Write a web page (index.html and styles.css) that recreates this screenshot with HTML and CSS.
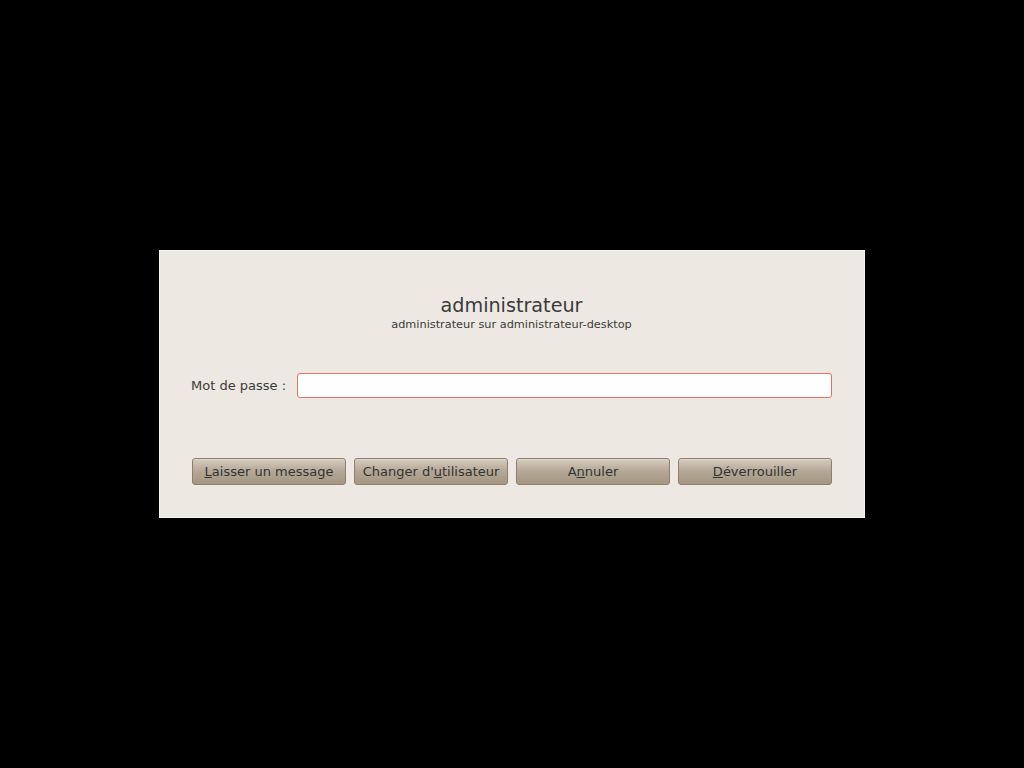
FILE: index.html
```html
<!DOCTYPE html>
<html lang="fr">
<head>
<meta charset="utf-8">
<link rel="stylesheet" href="styles.css">
</head>
<body>
<div class="screen">
  <div class="dialog">
    <div class="header">
      <div class="title">administrateur</div>
      <div class="subtitle">administrateur sur administrateur-desktop</div>
    </div>
    <div class="row">
      <label class="label">Mot de passe :</label>
      <div class="input"></div>
    </div>
    <div class="buttons">
      <button class="btn"><u>L</u>aisser un message</button>
      <button class="btn">Changer d'<u>u</u>tilisateur</button>
      <button class="btn">A<u>n</u>nuler</button>
      <button class="btn"><u>D</u>éverrouiller</button>
    </div>
  </div>
</div>
</body>
</html>
```
FILE: styles.css
```css
html, body {
  margin: 0;
  padding: 0;
  background: #000;
  width: 1024px;
  height: 768px;
  overflow: hidden;
}
.screen {
  width: 1024px;
  height: 768px;
  display: flex;
  align-items: flex-start;
  justify-content: center;
  padding-top: 250px;
  box-sizing: border-box;
  font-family: "DejaVu Sans", sans-serif;
  color: #3c3c3c;
}
.dialog {
  width: 706px;
  height: 268px;
  box-sizing: border-box;
  background: #ede9e2;
  border: 1px solid #f7f3e6;
  padding: 44px 32px 0 31px;
}
.header {
  text-align: center;
}
.title {
  font-size: 19.2px;
  line-height: 22px;
  color: #3a3a3a;
}
.subtitle {
  font-size: 11.3px;
  line-height: 14px;
  margin-top: 1px;
  color: #3a3a3a;
}
.row {
  display: flex;
  align-items: center;
  margin-top: 41px;
  height: 25px;
}
.label {
  font-size: 13px;
  width: 106px;
  flex: none;
  color: #3a3a3a;
}
.input {
  flex: 1;
  height: 25px;
  box-sizing: border-box;
  background: #fff;
  border: 1px solid #e4775a;
  border-radius: 3px;
}
.buttons {
  display: flex;
  gap: 8px;
  margin-top: 60px;
  margin-left: 1px;
}
.btn {
  width: 154px;
  height: 27px;
  box-sizing: border-box;
  border: 1px solid #8c8070;
  border-radius: 3px;
  background: linear-gradient(#d6ccbe, #b3a796 50%, #a4967f);
  font-family: "DejaVu Sans", sans-serif;
  font-size: 13px;
  color: #333;
  padding: 0;
  box-shadow: inset 0 1px 0 rgba(255,255,255,0.25);
}
.btn u {
  text-decoration-thickness: 1px;
}
```
